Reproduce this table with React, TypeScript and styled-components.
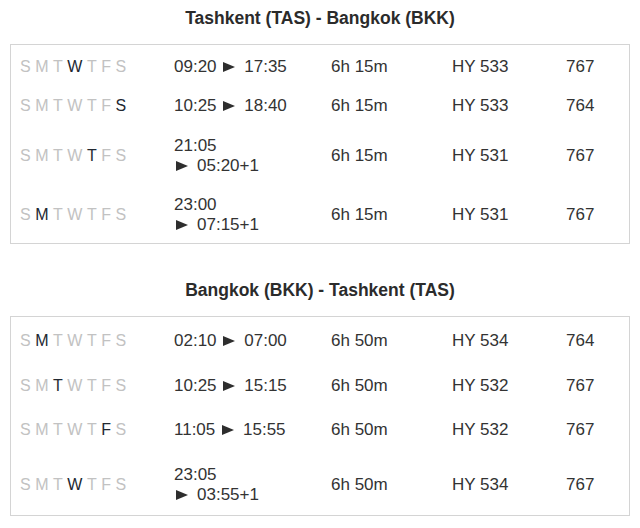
import React from 'react';
import styled, { createGlobalStyle } from 'styled-components';

const GlobalStyle = createGlobalStyle`
    body {
        margin: 0;
        background: #ffffff;
    }
`;

type Flight = {
    day: number;
    dep: string;
    arr: string;
    overnight?: boolean;
    duration: string;
    flight: string;
    aircraft: string;
};

const outbound: Flight[] = [
    { day: 3, dep: '09:20', arr: '17:35', duration: '6h 15m', flight: 'HY 533', aircraft: '767' },
    { day: 6, dep: '10:25', arr: '18:40', duration: '6h 15m', flight: 'HY 533', aircraft: '764' },
    { day: 4, dep: '21:05', arr: '05:20+1', overnight: true, duration: '6h 15m', flight: 'HY 531', aircraft: '767' },
    { day: 1, dep: '23:00', arr: '07:15+1', overnight: true, duration: '6h 15m', flight: 'HY 531', aircraft: '767' },
];

const inbound: Flight[] = [
    { day: 1, dep: '02:10', arr: '07:00', duration: '6h 50m', flight: 'HY 534', aircraft: '764' },
    { day: 2, dep: '10:25', arr: '15:15', duration: '6h 50m', flight: 'HY 532', aircraft: '767' },
    { day: 5, dep: '11:05', arr: '15:55', duration: '6h 50m', flight: 'HY 532', aircraft: '767' },
    { day: 3, dep: '23:05', arr: '03:55+1', overnight: true, duration: '6h 50m', flight: 'HY 534', aircraft: '767' },
];

const DAYS = ['S', 'M', 'T', 'W', 'T', 'F', 'S'];

const Page = styled.div`
    width: 640px;
    padding-top: 8px;
    font-family: 'Liberation Sans', Arial, sans-serif;
    color: #333333;
`;

const Section = styled.section`
    & + & {
        margin-top: 36px;
    }
`;

const Title = styled.h2`
    margin: 0;
    font-size: 17.5px;
    line-height: 20px;
    font-weight: bold;
    text-align: center;
    color: #2b2b2b;
`;

const Table = styled.div`
    margin: 16px 10px 0;
    height: 200px;
    box-sizing: border-box;
    border: 1px solid #d4d4d4;
    display: flex;
    flex-direction: column;
`;

const Row = styled.div`
    flex: 1 1 auto;
    display: grid;
    grid-template-columns: 154px 157px 121px 114px 1fr;
    align-items: center;
    padding: 4px 0 0 9px;
    font-size: 17px;
    line-height: 20px;
`;

const Days = styled.div`
    display: flex;
    gap: 4.5px;
    font-size: 16px;
`;

const Day = styled.span<{ $active: boolean }>`
    color: ${(p) => (p.$active ? '#222831' : '#c2c2c2')};
`;

const Times = styled.div`
    max-width: 134px;
`;

/* the ► pointer between departure and arrival */
const Arrow = styled.span`
    display: inline-block;
    width: 0;
    height: 0;
    border-left: 12px solid #2e2e2e;
    border-top: 5.5px solid transparent;
    border-bottom: 5.5px solid transparent;
    margin: 0 9px 0 2px;
    vertical-align: 0;
`;

const Cell = styled.div``;

const FlightRow = ({ f }: { f: Flight }) => (
    <Row>
        <Days>
            {DAYS.map((d, i) => (
                <Day key={i} $active={i === f.day}>{d}</Day>
            ))}
        </Days>
        <Times>
            {f.dep}
            {f.overnight ? <br /> : ' '}
            <Arrow aria-label="to" />{f.arr}
        </Times>
        <Cell>{f.duration}</Cell>
        <Cell>{f.flight}</Cell>
        <Cell>{f.aircraft}</Cell>
    </Row>
);

const Schedule = ({ title, flights }: { title: string; flights: Flight[] }) => (
    <Section>
        <Title>{title}</Title>
        <Table>
            {flights.map((f, i) => (
                <FlightRow key={i} f={f} />
            ))}
        </Table>
    </Section>
);

const App = () => (
    <Page>
        <GlobalStyle />
        <Schedule title="Tashkent (TAS) - Bangkok (BKK)" flights={outbound} />
        <Schedule title="Bangkok (BKK) - Tashkent (TAS)" flights={inbound} />
    </Page>
);

export default App;
